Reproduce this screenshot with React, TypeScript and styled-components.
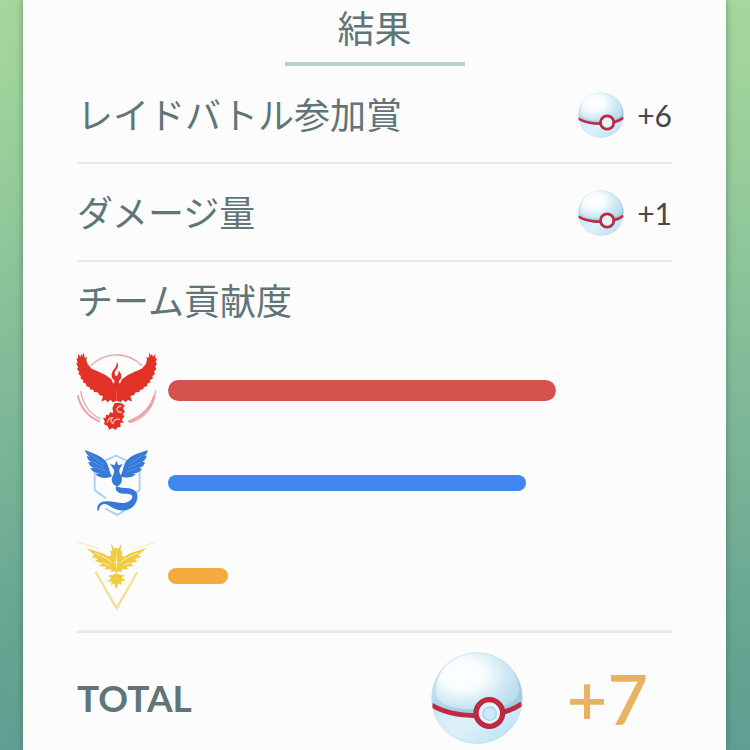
import React, { useId } from "react";
import styled, { createGlobalStyle } from "styled-components";

const GlobalStyle = createGlobalStyle`
  *, *::before, *::after { box-sizing: border-box; }
  body {
    margin: 0;
    font-family: Lato, "Noto Sans CJK JP", sans-serif;
    color: #5f7578;
  }
`;

const Page = styled.div`
  min-height: 100vh;
  padding: 0 24px 0 23px;
  background: linear-gradient(180deg, #a5d89c 0%, #9bd09b 17%, #80ba98 52%, #67a592 85%, #5f9f92 100%);
`;

const Card = styled.main`
  min-height: 100vh;
  padding: 5px 54px 6px;
  background: #fcfcfc;
  box-shadow: 0 0 7px rgba(60, 90, 75, 0.55);
`;

const Title = styled.h1`
  width: 180px;
  margin: 0 auto;
  padding-bottom: 9px;
  border-bottom: 4px solid #b7d3c0;
  font-size: 37px;
  font-weight: 400;
  line-height: 48px;
  text-align: center;
`;

const RewardList = styled.ul`
  margin: 0;
  padding: 0;
  list-style: none;
`;

const RewardRow = styled.li`
  display: flex;
  align-items: center;
  height: 98px;
  padding-top: 2px;
  border-bottom: 2px solid #e9eaea;
`;

const Label = styled.span`
  flex: 1;
  font-size: 36px;
  font-weight: 400;
  line-height: 48px;
`;

const Amount = styled.span`
  margin-left: 13px;
  color: #484848;
  font-size: 30px;
  line-height: 36px;
`;

const Section = styled.section`
  padding: 15px 0 13px;
  border-bottom: 3px solid #e9eaea;
`;

const SectionTitle = styled.h2`
  margin: 0 0 24px;
  font-size: 36px;
  font-weight: 400;
  line-height: 48px;
`;

const Teams = styled.div`
  display: grid;
  gap: 11px;
`;

const TeamRow = styled.div`
  display: flex;
  align-items: center;
`;

const Emblem = styled.svg`
  flex: none;
  width: 82px;
  height: 82px;
  margin-right: 9px;
  overflow: visible;
`;

const Track = styled.div`
  flex: 1;
`;

const Bar = styled.div<{ $color: string; $tall?: boolean }>`
  height: ${(p) => (p.$tall ? 21 : 16)}px;
  border-radius: 11px;
  background: ${(p) => p.$color};
`;

const TotalRow = styled.footer`
  display: flex;
  align-items: center;
  padding: 19px 24px 0 0;
`;

const TotalLabel = styled.strong`
  flex: 1;
  font-size: 37px;
  font-weight: 700;
  line-height: 44px;
`;

const TotalAmount = styled.strong`
  margin-left: 44px;
  color: #e9b263;
  font-size: 70px;
  font-weight: 600;
  line-height: 84px;
`;

const BallIcon = styled.svg<{ $size: number }>`
  flex: none;
  width: ${(p) => p.$size}px;
  height: ${(p) => p.$size}px;
`;

function Ball({ size, detailed = false }: { size: number; detailed?: boolean }) {
  const id = useId();
  const shell = `${id}shell`;
  const shine = `${id}shine`;
  const base = `${id}base`;
  const clip = `${id}clip`;
  return (
    <BallIcon $size={size} viewBox="37 36 276 276" aria-hidden="true">
      <defs>
        <linearGradient id={shell} x1="0" y1="0" x2="0.4" y2="1">
          <stop offset="0" stopColor="#e4f3fa" />
          <stop offset="0.4" stopColor="#c3e0ee" />
          <stop offset="0.7" stopColor="#9fcbe0" />
          <stop offset="1" stopColor="#a9d3e6" />
        </linearGradient>
        <radialGradient id={shine} cx="0.32" cy="0.38" r="0.75">
          <stop offset="0" stopColor="#ffffff" />
          <stop offset="0.35" stopColor="#f7fcfe" />
          <stop offset="0.75" stopColor="#cbe6f3" />
          <stop offset="1" stopColor="#b9dced" />
        </radialGradient>
        <linearGradient id={base} x1="0" y1="0" x2="1" y2="0.6">
          <stop offset="0" stopColor="#c9e7f7" />
          <stop offset="0.5" stopColor="#def1fb" />
          <stop offset="1" stopColor="#bfe2f5" />
        </linearGradient>
        <clipPath id={clip}><circle cx="175" cy="174" r="137" /></clipPath>
      </defs>
      <g clipPath={`url(#${clip})`}>
        <circle cx="175" cy="174" r="137" fill={`url(#${shell})`} />
        <path d="M55 172C42 104 95 38 176 38c67 0 115 43 125 107 3 25-18 44-50 53-15-22-58-27-77 11-55 0-107-10-119-37Z" fill={`url(#${shine})`} />
        <path d="M36 190c36 27 85 36 140 37 54-1 103-11 138-40v128H36Z" fill={`url(#${base})`} />
        <path d="M39 195c37 23 82 31 134 32 54-1 103-11 136-36" fill="none" stroke="#9b3f50" strokeWidth="15" />
        <path d="M39 195c37 23 82 31 134 32 54-1 103-11 136-36" fill="none" stroke="#d2223d" strokeWidth="9" />
        <circle cx="175" cy="174" r="136" fill="none" stroke="#c3d9e6" strokeWidth="2" />
      </g>
      <circle cx="212" cy="219" r="40" fill="#e3f2fb" stroke="#963748" strokeWidth="16" />
      <circle cx="212" cy="219" r="39" fill="none" stroke="#d2223d" strokeWidth="10" />
      {detailed && <circle cx="213" cy="221" r="20" fill="#cfe8f7" stroke="#abd1e7" strokeWidth="4" />}
    </BallIcon>
  );
}

function ValorWing() {
  return (
    <path d="M57 37L53 48 49 41 46 51 39 41 39 56 34 53 38 68 34 69 39 82 36 86 43 96 40 101 48 109 46 115 55 121 54 127 64 132 63 138 74 142 75 148 86 150 86 156 98 157 103 165 114 168 109 185 121 179 128 187 137 179 143 187 155 182 155 143 148 137 139 118 120 104 98 94 80 86 68 73 64 60 66 51 59 54Z" />
  );
}

function ValorEmblem() {
  return (
    <Emblem viewBox="36 27 246 246" role="img" aria-label="Valor">
      <g fill="none" stroke="#e9a3ab">
        <path d="M78 77c42-43 107-44 153 0" strokeWidth="4" />
        <path d="M38 166c9 38 31 65 67 79" strokeWidth="6" />
        <path d="M47 153c6 42 25 66 59 84" strokeWidth="4" />
        <path d="M192 248c43-10 75-42 80-97" strokeWidth="4" />
        <path d="M190 245c38-13 66-38 78-78" strokeWidth="7" />
      </g>
      <g fill="#e13225">
        <ValorWing />
        <g transform="translate(310 0) scale(-1 1)"><ValorWing /></g>
        <path d="M155 66c3 14-12 22-15 35-2 10 4 16 9 22l-8 19 14 10 14-10-8-18c7-6 10-12 7-22l-7-11c0 9-2 14-7 18-8-7-5-14 0-20 6-8 8-15 1-23Z" />
        <path d="M148 190C158 186 175 188 179 198L174 205 180 216 173 221 178 230 171 238 175 249 166 248 167 260 156 263 153 270 142 264 132 269 128 258 117 253 119 243 114 235 122 233 123 224 131 226 135 217 145 219 142 205Z" />
      </g>
      <path d="M169 198c-9 1-16 6-13 13s10 6 14 5M127 248c1-10 7-15 15-14-7 5-5 12 2 16 1-9 10-15 21-12" fill="none" stroke="#f8b9b3" strokeWidth="4" />
    </Emblem>
  );
}

function MysticEmblem() {
  return (
    <Emblem viewBox="36 18 246 246" role="img" aria-label="Mystic">
      <path d="M118 75l35-16 37 17M89 104v58l34 26M224 104v58l-12 8M121 218l36 19 35-23" fill="none" stroke="#acd2f2" strokeWidth="6" />
      <g fill="#3679d7">
        <path d="M60 41c21 11 47 15 62 35 10 12 9 28 19 45-16 9-40 5-50-7l14-3c-15 2-24-6-29-14l12-1c-10-2-17-9-18-18l9 1c-8-5-13-11-13-20l9 4c-9-7-14-14-15-22Z" />
        <path d="M248 42c-19 8-43 11-61 29-16 17-9 33-22 49 16 7 35 7 47-5l-10-4c13 2 23-3 29-13l-10-2c10-1 17-9 19-17l-9-1c9-4 14-12 14-20l-8 3c8-6 11-13 11-19Z" />
        <path d="M154 74L160 88 173 84 165 97C160 108 165 114 170 123C173 136 167 148 157 151C144 147 138 137 141 125C145 114 151 108 145 98L135 84 149 88Z" />
        <path d="M153 150c10 6 25 5 39 7 20 4 27 14 25 29-2 18-16 35-38 37-20 2-37-7-50-16-12-6-20-2-23 4-4 5-3 10-6 14-4-2-4-9-2-15 5-10 14-14 27-14 19-1 39 8 56 4 12-3 21-11 21-18 0-9-14-9-27-9-13-1-26-6-22-23Z" />
      </g>
      <path d="M74 54l42 31m-34-10 35 21m-28-3 33 11m112-47-40 28m34-7-38 19m30-2-35 13" fill="none" stroke="#6da6e8" strokeWidth="2" />
    </Emblem>
  );
}

function InstinctWing() {
  return (
    <path d="M138 40L148 56 154 52 154 132 148 124 137 126 139 118 118 118 125 110 102 108 112 100 89 94 99 88 79 80 89 76 64 54 116 71 131 80 139 76 135 62 142 64Z" />
  );
}

function InstinctEmblem() {
  return (
    <Emblem viewBox="36 15 246 246" role="img" aria-label="Instinct">
      <path d="M39 36l66 21M267 38l-64 20" fill="none" stroke="#f8edc2" strokeWidth="4" />
      <path d="M92 126l63 109 62-109" fill="none" stroke="#f4df92" strokeWidth="7" />
      <g fill="#eecb40">
        <InstinctWing />
        <g transform="translate(308 0) scale(-1 1)"><InstinctWing /></g>
        <path d="M129 137L154 131 180 137 169 142 183 154 168 152 171 166 161 160 154 177 147 160 138 167 140 153 126 156 139 143Z" />
      </g>
      <path d="M88 68l38 18 16 12m78-30-38 18-16 12M113 98l22 8m60-8-22 8M154 82v30m-8-12 8-6 8 6" fill="none" stroke="#fcf1bd" strokeWidth="3" />
    </Emblem>
  );
}

const rewards = [
  { label: "レイドバトル参加賞", amount: "+6" },
  { label: "ダメージ量", amount: "+1" },
];

const teams = [
  { name: "Valor", Icon: ValorEmblem, color: "#d4514e", share: 77, tall: true },
  { name: "Mystic", Icon: MysticEmblem, color: "#4086f0", share: 71, tall: false },
  { name: "Instinct", Icon: InstinctEmblem, color: "#f2ab3d", share: 12, tall: false },
];

export default function App() {
  return (
    <>
      <GlobalStyle />
      <Page>
        <Card>
          <Title>結果</Title>
          <RewardList>
            {rewards.map(({ label, amount }) => (
              <RewardRow key={label}>
                <Label>{label}</Label>
                <Ball size={46} />
                <Amount>{amount}</Amount>
              </RewardRow>
            ))}
          </RewardList>
          <Section>
            <SectionTitle>チーム貢献度</SectionTitle>
            <Teams>
              {teams.map(({ name, Icon, color, share, tall }) => (
                <TeamRow key={name}>
                  <Icon />
                  <Track role="meter" aria-label={name} aria-valuemin={0} aria-valuemax={100} aria-valuenow={share}>
                    <Bar $color={color} $tall={tall} style={{ width: `${share}%` }} />
                  </Track>
                </TeamRow>
              ))}
            </Teams>
          </Section>
          <TotalRow>
            <TotalLabel>TOTAL</TotalLabel>
            <Ball size={92} detailed />
            <TotalAmount>+7</TotalAmount>
          </TotalRow>
        </Card>
      </Page>
    </>
  );
}
